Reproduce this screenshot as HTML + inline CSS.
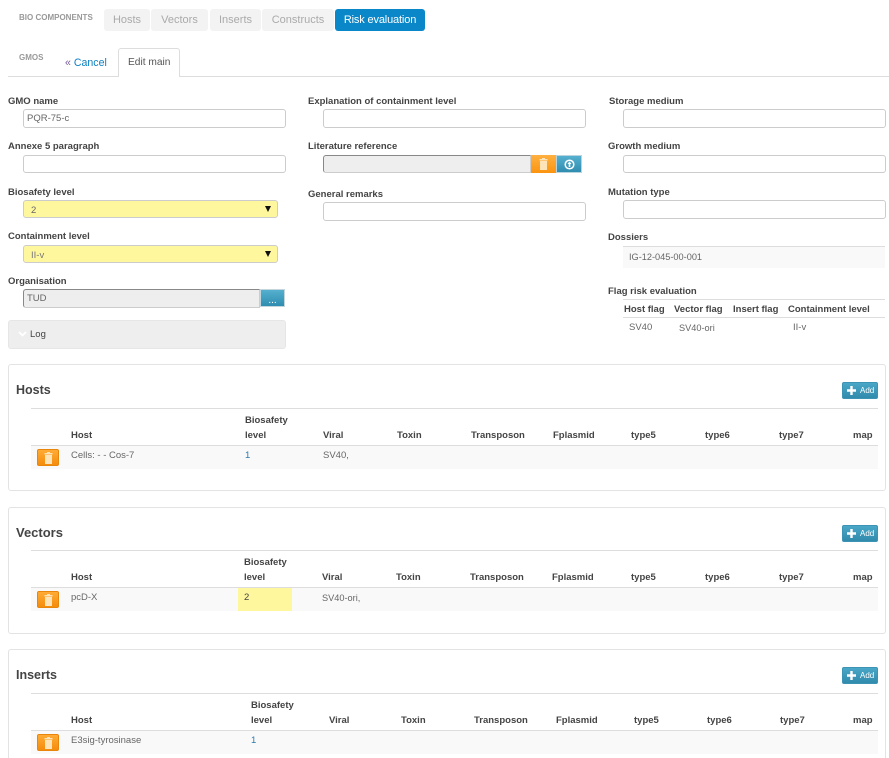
<!DOCTYPE html>
<html><head><meta charset="utf-8"><style>
html,body{margin:0;padding:0;background:#fff;width:889px;height:758px;overflow:hidden}
body{position:relative;font-family:"Liberation Sans",sans-serif;font-size:9.5px;color:#555}
div,span,svg{position:absolute;box-sizing:border-box}
span{white-space:nowrap;line-height:12px;margin-top:1px}
.l{font-weight:bold;color:#444;font-size:9.5px}
.h{font-weight:bold;color:#444;font-size:9.5px}
.tab{height:22px;top:9px;background:#f3f3f3;border-radius:3px;color:#aaa;font-size:11px;line-height:23px;text-align:center}
.in{background:#fff;border:1px solid #ccc;border-radius:3px}
.dis{background:#eee;border:1px solid #ccc;border-left-color:#888;border-top-color:#888;border-radius:3px 0 0 3px}
.sel{background:#fff79e;border:1px solid #ccc;border-radius:3px}
.ar{width:0;height:0;border-left:3.5px solid transparent;border-right:3.5px solid transparent;border-top:6px solid #111}
.or{background:linear-gradient(#ffb040,#fb9410);}
.bl{background:linear-gradient(#55b0cf,#2f8db0);}
.p{left:8px;width:878px;background:#fff;border:1px solid #e3e3e3;border-radius:3px}
.line{background:#ddd;height:1px}
.bt{left:37px;width:22px;height:17px;border-radius:2px;background:linear-gradient(#ffab35,#f58c0c);border:1px solid #e8860c}
.add{left:842px;width:36px;height:17px;border-radius:2px;background:linear-gradient(#4ba7c7,#2f8aac);border:1px solid #3d93b3;color:#fff;font-size:8px}
.add span{margin-top:0}
</style></head><body>
<span style="left:19px;top:11px;font-size:8px;font-weight:bold;color:#999">BIO COMPONENTS</span>
<div class="tab" style="left:104px;width:46px">Hosts</div>
<div class="tab" style="left:151px;width:57px">Vectors</div>
<div class="tab" style="left:210px;width:51px">Inserts</div>
<div class="tab" style="left:262px;width:72px">Constructs</div>
<div class="tab" style="left:335px;width:90px;background:#0a87c9;color:#fff;letter-spacing:-.15px">Risk evaluation</div>

<span style="left:19px;top:51px;font-size:8px;font-weight:bold;color:#999">GMOS</span>
<div style="left:8px;top:76px;width:881px;height:1px;background:#ddd"></div>
<span style="left:65px;top:56px;font-size:10.6px;color:#0a7fc2"><span style="position:static;color:#7a5fa0">«</span> Cancel</span>
<div style="left:118px;top:48px;width:62px;height:29px;background:#fff;border:1px solid #ddd;border-bottom:0;border-radius:3px 3px 0 0"></div>
<span style="left:128px;top:56px;font-size:10.2px;color:#555">Edit main</span>

<span class="l" style="left:8px;top:95px">GMO name</span>
<div class="in" style="left:23px;top:109px;width:263px;height:19px"></div>
<span style="left:27px;top:112px;color:#666">PQR-75-c</span>
<span class="l" style="left:8px;top:140px">Annexe 5 paragraph</span>
<div class="in" style="left:23px;top:155px;width:263px;height:18px"></div>
<span class="l" style="left:8px;top:186px">Biosafety level</span>
<div class="sel" style="left:23px;top:200px;width:255px;height:18px"></div>
<span style="left:31px;top:204px;color:#666">2</span>
<div class="ar" style="left:265px;top:206px"></div>
<span class="l" style="left:8px;top:230px">Containment level</span>
<div class="sel" style="left:23px;top:245px;width:255px;height:18px"></div>
<span style="left:31px;top:249px;color:#777">II-v</span>
<div class="ar" style="left:265px;top:251px"></div>
<span class="l" style="left:8px;top:275px">Organisation</span>
<div class="dis" style="left:23px;top:289px;width:237px;height:19px"></div>
<span style="left:27px;top:292px;color:#666">TUD</span>
<div class="bl" style="left:260px;top:289px;width:25px;height:18px;border:1px solid #c5d5dc;color:#fff;text-align:center;font-size:10px;line-height:21px">...</div>
<div style="left:8px;top:320px;width:278px;height:29px;background:#eee;border:1px solid #e6e6e6;border-radius:3px"></div>
<svg style="left:18px;top:331px" width="9" height="6" viewBox="0 0 9 6"><path d="M1 1l3.500 3.500L8 1" fill="none" stroke="#fff" stroke-width="1.800"/></svg>
<span style="left:30px;top:328px;color:#444">Log</span>

<span class="l" style="left:308px;top:95px">Explanation of containment level</span>
<div class="in" style="left:323px;top:109px;width:263px;height:19px"></div>
<span class="l" style="left:308px;top:140px">Literature reference</span>
<div class="dis" style="left:323px;top:155px;width:208px;height:18px"></div>
<div class="or" style="left:531px;top:155px;width:25px;height:18px"><svg style="left:8px;top:3px" width="9" height="12" viewBox="0 0 9 12"><path d="M3 0h3v1h2.500v1.500H.5V1H3zM1 3h7v9H1z" fill="#fde3b8"/></svg></div>
<div class="bl" style="left:556px;top:155px;width:26px;height:18px;border:1px solid #b9d4de"><svg style="left:7px;top:3px" width="11" height="11" viewBox="0 0 11 11"><circle cx="5.500" cy="5.500" r="4.300" fill="none" stroke="#fff" stroke-width="1.500"/><path d="M4.700 5h1.600v3H4.700zM5.500 2.500l2 2.500h-4z" fill="#fff"/></svg></div>
<span class="l" style="left:308px;top:188px">General remarks</span>
<div class="in" style="left:323px;top:202px;width:263px;height:19px"></div>

<span class="l" style="left:609px;top:95px">Storage medium</span>
<div class="in" style="left:623px;top:109px;width:263px;height:19px"></div>
<span class="l" style="left:608px;top:140px">Growth medium</span>
<div class="in" style="left:623px;top:155px;width:263px;height:18px"></div>
<span class="l" style="left:608px;top:186px">Mutation type</span>
<div class="in" style="left:623px;top:200px;width:263px;height:19px"></div>
<span class="l" style="left:608px;top:231px">Dossiers</span>
<div style="left:623px;top:246px;width:262px;height:22px;background:#f9f9f9;border-top:1px solid #ddd"></div>
<span style="left:629px;top:250px;color:#666;font-size:9.2px">IG-12-045-00-001</span>
<span class="l" style="left:608px;top:285px">Flag risk evaluation</span>
<div class="line" style="left:623px;top:299px;width:262px"></div>
<div class="line" style="left:623px;top:317px;width:262px"></div>
<span class="h" style="left:624px;top:303px">Host flag</span>
<span class="h" style="left:674px;top:303px">Vector flag</span>
<span class="h" style="left:733px;top:303px">Insert flag</span>
<span class="h" style="left:788px;top:303px">Containment level</span>
<span style="left:629px;top:321px;color:#666">SV40</span>
<span style="left:679px;top:321px;color:#666;font-size:9.2px">SV40-ori</span>
<span style="left:793px;top:321px;color:#666">II-v</span>

<!-- Hosts -->
<div class="p" style="top:364px;height:127px"></div>
<span style="left:16px;top:383px;font-size:12.5px;font-weight:bold;color:#444">Hosts</span>
<div class="add" style="top:382px"><svg style="left:4px;top:3px" width="9" height="9" viewBox="0 0 9 9"><path d="M3.300 0h2.400v3.300H9v2.400H5.700V9H3.300V5.700H0V3.300h3.300z" fill="#fff"/></svg><span style="left:17px;top:2px">Add</span></div>
<div class="line" style="left:31px;top:408px;width:847px"></div>
<div class="line" style="left:31px;top:445px;width:847px"></div>
<div style="left:31px;top:446px;width:847px;height:23px;background:#f9f9f9"></div>
<span class="h" style="left:71px;top:429px">Host</span>
<span class="h" style="left:245px;top:414px">Biosafety</span>
<span class="h" style="left:245px;top:429px">level</span>
<span class="h" style="left:323px;top:429px">Viral</span>
<span class="h" style="left:397px;top:429px">Toxin</span>
<span class="h" style="left:471px;top:429px">Transposon</span>
<span class="h" style="left:553px;top:429px">Fplasmid</span>
<span class="h" style="left:631px;top:429px">type5</span>
<span class="h" style="left:705px;top:429px">type6</span>
<span class="h" style="left:779px;top:429px">type7</span>
<span class="h" style="left:853px;top:429px">map</span>
<div class="bt" style="top:449px"><svg style="left:6px;top:2px" width="9" height="12" viewBox="0 0 9 12"><path d="M3 0h3v1h2.500v1.500H.5V1H3zM1 3h7v9H1z" fill="#fde3b8"/></svg></div>
<span style="left:71px;top:449px;color:#666">Cells: - - Cos-7</span>
<span style="left:245px;top:449px;color:#2a7aa8">1</span>
<span style="left:323px;top:449px;color:#666">SV40,</span>

<!-- Vectors -->
<div class="p" style="top:507px;height:127px"></div>
<span style="left:16px;top:526px;font-size:13px;font-weight:bold;color:#444">Vectors</span>
<div class="add" style="top:525px"><svg style="left:4px;top:3px" width="9" height="9" viewBox="0 0 9 9"><path d="M3.300 0h2.400v3.300H9v2.400H5.700V9H3.300V5.700H0V3.300h3.300z" fill="#fff"/></svg><span style="left:17px;top:2px">Add</span></div>
<div class="line" style="left:31px;top:550px;width:847px"></div>
<div class="line" style="left:31px;top:587px;width:847px"></div>
<div style="left:31px;top:588px;width:847px;height:23px;background:#f9f9f9"></div>
<div style="left:238px;top:588px;width:54px;height:23px;background:#fff79e"></div>
<span class="h" style="left:71px;top:571px">Host</span>
<span class="h" style="left:244px;top:556px">Biosafety</span>
<span class="h" style="left:244px;top:571px">level</span>
<span class="h" style="left:322px;top:571px">Viral</span>
<span class="h" style="left:396px;top:571px">Toxin</span>
<span class="h" style="left:470px;top:571px">Transposon</span>
<span class="h" style="left:552px;top:571px">Fplasmid</span>
<span class="h" style="left:631px;top:571px">type5</span>
<span class="h" style="left:705px;top:571px">type6</span>
<span class="h" style="left:779px;top:571px">type7</span>
<span class="h" style="left:853px;top:571px">map</span>
<div class="bt" style="top:591px"><svg style="left:6px;top:2px" width="9" height="12" viewBox="0 0 9 12"><path d="M3 0h3v1h2.500v1.500H.5V1H3zM1 3h7v9H1z" fill="#fde3b8"/></svg></div>
<span style="left:71px;top:591px;color:#666">pcD-X</span>
<span style="left:244px;top:591px;color:#444">2</span>
<span style="left:322px;top:591px;color:#666;font-size:9.2px">SV40-ori,</span>

<!-- Inserts -->
<div class="p" style="top:649px;height:130px"></div>
<span style="left:16px;top:668px;font-size:12.5px;font-weight:bold;color:#444">Inserts</span>
<div class="add" style="top:667px"><svg style="left:4px;top:3px" width="9" height="9" viewBox="0 0 9 9"><path d="M3.300 0h2.400v3.300H9v2.400H5.700V9H3.300V5.700H0V3.300h3.300z" fill="#fff"/></svg><span style="left:17px;top:2px">Add</span></div>
<div class="line" style="left:31px;top:693px;width:847px"></div>
<div class="line" style="left:31px;top:730px;width:847px"></div>
<div style="left:31px;top:731px;width:847px;height:23px;background:#f9f9f9"></div>
<span class="h" style="left:71px;top:714px">Host</span>
<span class="h" style="left:251px;top:699px">Biosafety</span>
<span class="h" style="left:251px;top:714px">level</span>
<span class="h" style="left:329px;top:714px">Viral</span>
<span class="h" style="left:401px;top:714px">Toxin</span>
<span class="h" style="left:474px;top:714px">Transposon</span>
<span class="h" style="left:556px;top:714px">Fplasmid</span>
<span class="h" style="left:634px;top:714px">type5</span>
<span class="h" style="left:707px;top:714px">type6</span>
<span class="h" style="left:780px;top:714px">type7</span>
<span class="h" style="left:853px;top:714px">map</span>
<div class="bt" style="top:734px"><svg style="left:6px;top:2px" width="9" height="12" viewBox="0 0 9 12"><path d="M3 0h3v1h2.500v1.500H.5V1H3zM1 3h7v9H1z" fill="#fde3b8"/></svg></div>
<span style="left:71px;top:734px;color:#666">E3sig-tyrosinase</span>
<span style="left:251px;top:734px;color:#2a7aa8">1</span>
</body></html>
